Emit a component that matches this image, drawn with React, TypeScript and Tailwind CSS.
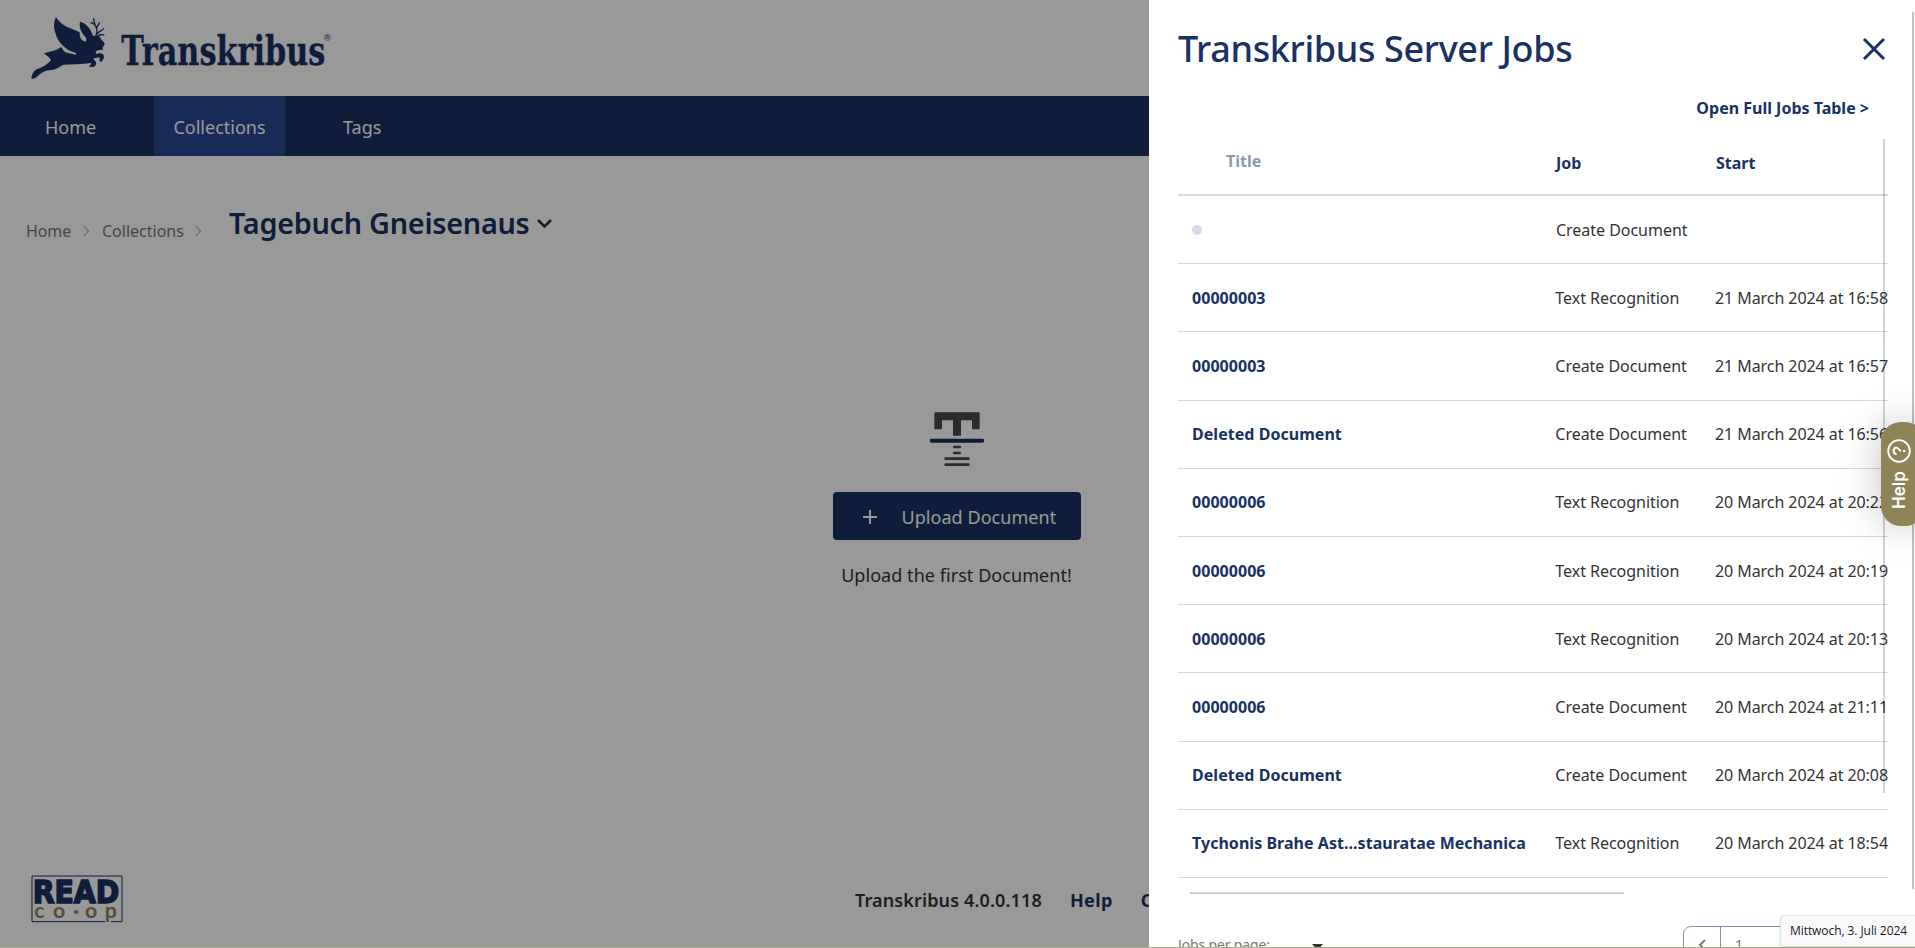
import React from "react";

type Job = { title: string; job: string; start: string };

const jobs: Job[] = [
  { title: "", job: "Create Document", start: "" },
  { title: "00000003", job: "Text Recognition", start: "21 March 2024 at 16:58" },
  { title: "00000003", job: "Create Document", start: "21 March 2024 at 16:57" },
  { title: "Deleted Document", job: "Create Document", start: "21 March 2024 at 16:56" },
  { title: "00000006", job: "Text Recognition", start: "20 March 2024 at 20:22" },
  { title: "00000006", job: "Text Recognition", start: "20 March 2024 at 20:19" },
  { title: "00000006", job: "Text Recognition", start: "20 March 2024 at 20:13" },
  { title: "00000006", job: "Create Document", start: "20 March 2024 at 21:11" },
  { title: "Deleted Document", job: "Create Document", start: "20 March 2024 at 20:08" },
  { title: "Tychonis Brahe Ast...stauratae Mechanica", job: "Text Recognition", start: "20 March 2024 at 18:54" },
];

function Logo() {
  return (
    <svg width="360" height="96" viewBox="0 0 1080 288" className="block overflow-visible" fill="#193163">
      <path d="M94 236 C94 226 100 215 107 209 C122 204 140 196 153 180 C150 172 140 168 132 160 C142 155 160 154 170 149 L184 141 C188 148 192 154 196 157 L226 164 C232 162 228 158 222 157 C198 150 174 128 167 102 C160 82 161 64 168 51 C174 62 190 78 208 83 L239 97 C239 110 241 121 256 125 C263 118 258 111 250 104 C240 90 237 77 240 65 C258 69 273 86 279 108 L295 106 C302 112 302 120 312 126 L314 134 C311 138 306 140 309 150 L298 150 C288 151 284 157 290 162 C296 158 306 159 311 165 C313 173 311 180 302 186 C296 183 302 177 297 171 C290 176 281 171 281 179 C291 185 291 193 283 200 L269 201 C266 195 277 194 273 189 C247 193 215 194 190 194 C178 201 166 210 152 210 C137 210 124 218 113 228 C108 235 101 237 94 236 Z" />
      <g fill="none" stroke="#193163" strokeWidth="4">
        <path d="M287 110C293 96 290 82 285 75C281 71 277 70 272 67M281 55C281 66 285 71 286 78M289 85 299 67M291 103C296 92 304 94 312 85M294 108C300 101 306 106 313 104" />
      </g>
      <text x="364" y="195" fontFamily="'DejaVu Serif','Liberation Serif',serif" fontWeight="700" fontSize="122" stroke="#193163" strokeWidth="1" textLength="612" lengthAdjust="spacingAndGlyphs">Transkribus</text>
      <text x="972" y="123" fontFamily="'Liberation Sans',sans-serif" fontSize="28">®</text>
    </svg>
  );
}

function TIcon() {
  return (
    <svg width="54" height="55" viewBox="0 0 162 165" className="block">
      <path d="M16 1h130q3 0 3 3v45q0 3-3 3h-17q-3 0-3-3V25H93v46H69V25H36v24q0 3-3 3H16q-3 0-3-3V4q0-3 3-3z" fill="#4a4a4a" />
      <rect x="0" y="80" width="162" height="12" rx="4" fill="#193163" />
      <g fill="#4a4a4a">
        <rect x="69" y="101" width="24" height="8" rx="3" />
        <rect x="69" y="119" width="24" height="8" rx="3" />
        <rect x="43" y="136" width="76" height="8" rx="4" />
        <rect x="43" y="154" width="76" height="8" rx="4" />
      </g>
    </svg>
  );
}

function ReadCoop() {
  return (
    <svg width="92" height="49" viewBox="0 0 276 147" className="block overflow-visible">
      <path d="M222 140H3V3H273V140H240" fill="none" stroke="#193163" strokeWidth="3" />
      <text x="5" y="85" fontFamily="'DejaVu Sans',sans-serif" fontWeight="700" fontSize="95" fill="#193163" stroke="#193163" strokeWidth="5" textLength="260" lengthAdjust="spacingAndGlyphs">READ</text>
      <text x="10 66 127 162 221" y="129" fontFamily="Lato,sans-serif" fontWeight="700" fontSize="64" fill="#8f8358">co·op</text>
    </svg>
  );
}

export default function App() {
  return (
    <div className="relative h-[948px] w-[1915px] overflow-hidden bg-white font-['Noto_Sans',sans-serif] text-[#333]">
      <div className="flex h-full flex-col">
        <header className="h-24 shrink-0">
          <Logo />
        </header>
        <nav className="flex h-[60px] shrink-0 items-stretch bg-[#193163] text-lg text-white">
          <a className="flex w-[154px] items-center pt-[2px] pl-[45px]">Home</a>
          <a className="flex w-[131px] items-center justify-center bg-[#28488f] pt-[2px]">Collections</a>
          <a className="flex items-center pt-[2px] pl-[58px]">Tags</a>
        </nav>
        <div className="flex h-[100px] shrink-0 items-end pb-[13px] pl-[26px] text-base text-[#777]">
          <span className="w-[46px] whitespace-nowrap tracking-[-0.1px]">Home</span>
          <svg width="30" height="24" viewBox="0 0 30 24" fill="none" stroke="#bbb" strokeWidth="1.3"><path d="m12 7 4.500 5-4.500 5" /></svg>
          <span className="w-[82px] whitespace-nowrap">Collections</span>
          <svg width="30" height="24" viewBox="0 0 30 24" fill="none" stroke="#bbb" strokeWidth="1.3"><path d="m12 7 4.500 5-4.500 5" /></svg>
          <h1 className="ml-[15px] w-[307px] pb-px text-[28.8px] leading-[38px] font-semibold tracking-[-0.27px] whitespace-nowrap text-[#193163]">Tagebuch Gneisenaus</h1>
          <svg width="18" height="38" viewBox="0 0 18 38" fill="none" stroke="#193163" strokeWidth="2.5" className="mb-px"><path d="m2 16 6.500 6.500L15 16" /></svg>
        </div>
        <main className="flex flex-1 flex-col items-center pt-[156px] pr-[2px] text-lg">
          <TIcon />
          <button className="mt-[25px] flex h-12 w-[248px] items-center rounded bg-[#193163] pl-[30px] text-white">
            <svg width="14" height="14" viewBox="0 0 14 14" stroke="white" strokeWidth="2" className="mt-[2px]"><path d="M7 0v14M0 7h14" /></svg>
            <span className="mt-[2px] ml-[25px] whitespace-nowrap tracking-[0.05px]">Upload Document</span>
          </button>
          <p className="mt-[21px] tracking-[0.05px]">Upload the first Document!</p>
        </main>
        <footer className="flex h-[73px] shrink-0 items-start pl-[31px]">
          <ReadCoop />
          <div className="mt-[11px] ml-[732px] flex gap-7 text-lg font-semibold whitespace-nowrap">
            <span className="tracking-[0.13px]">Transkribus 4.0.0.118</span>
            <span className="font-bold tracking-[0.4px] text-[#193163]">Help</span>
            <span className="font-bold text-[#193163]">Contact</span>
          </div>
        </footer>
      </div>

      <div className="absolute inset-0 bg-black/40" />

      <div className="absolute top-[139px] left-[1883px] z-10 h-[654px] w-[2px] bg-[#14233c]/20" />
      <aside className="absolute inset-y-0 right-0 flex w-[766px] flex-col bg-white pl-[29px]">
        <div className="flex h-[98px] shrink-0 items-center justify-between pr-[29px]">
          <h2 className="text-4xl font-medium tracking-[-0.36px] whitespace-nowrap text-[#193163]">Transkribus Server Jobs</h2>
          <svg width="24" height="24" viewBox="0 0 24 24" stroke="#193163" strokeWidth="3"><path d="M2 2l20 20M22 2 2 22" /></svg>
        </div>
        <div className="flex h-[41px] shrink-0 justify-end pr-[46px] text-base leading-[20px] font-bold text-[#193163]">Open Full Jobs Table &gt;</div>
        <div className="w-[710px]">
          <div className="flex h-[57px] items-center border-b-2 border-[#dadada] pb-[8px] text-base font-bold text-[#193163]">
            <span className="w-[378px] pb-[3px] pl-12 text-[#8c98b1]">Title</span>
            <span className="w-[160px]">Job</span>
            <span>Start</span>
          </div>
          {jobs.map((j, i) => (
            <div key={i} className="flex h-[68.2px] items-center border-b border-[#dadada] text-base whitespace-nowrap">
              <span className="w-[378px] pl-[14px] font-bold tracking-[0.04px] text-[#193163]">
                {j.title || <i className="block size-[10px] rounded-full bg-[#d5dae4]" />}
              </span>
              <span className="w-[160px] tracking-[-0.03px]">{j.job}</span>
              <span className="tracking-[-0.07px]">{j.start}</span>
            </div>
          ))}
        </div>
        <div className="mt-[14px] ml-3 h-[2px] w-[434px] shrink-0 bg-[#cccfd3]" />
        <div className="mt-[32px] flex shrink-0 items-start text-sm text-[#777]">
          <span className="mt-[9px] w-[134px] tracking-[-0.15px]">Jobs per page:</span>
          <svg width="12" height="8" viewBox="0 0 12 8" className="mt-[18px]"><path d="M0 0h11L5.500 6z" fill="#333" /></svg>
          <div className="ml-[359px] flex h-10 w-[205px] rounded-lg border border-[#7f8fb3]">
            <span className="flex w-[37px] justify-center border-r border-[#7f8fb3] pt-[12px]">
              <svg width="8" height="12" viewBox="0 0 8 12" fill="none" stroke="#777" strokeWidth="2"><path d="M7 1 2 6l5 5" /></svg>
            </span>
            <span className="pt-[8px] pl-[14px]">1</span>
          </div>
        </div>
      </aside>

      <div className="absolute top-[12px] left-[1912px] h-[877px] w-[2px] bg-[#c1c1c1]" />
      <div className="absolute top-[422px] left-[1881px] z-20 flex h-[104px] w-[44px] flex-col items-center rounded-[20px] bg-[#8f8358] pt-[17px] pr-[9px] text-white shadow-[0_0_40px_rgba(0,0,0,0.25)]">
        <svg width="24" height="24" viewBox="0 0 24 24" fill="none" stroke="white" strokeWidth="2" className="shrink-0 -rotate-90">
          <circle cx="12" cy="12" r="10.800" strokeWidth="1.800" />
          <path d="M8.800 9.600c.2-4 6.600-3.900 6.600-.3 0 2.300-3.200 2.400-3.300 4.800M12 16v2.300" />
        </svg>
        <span className="mt-[8px] h-[38px] rotate-180 font-['Inter',sans-serif] text-[17px] leading-[20px] font-semibold [writing-mode:vertical-rl]">Help</span>
      </div>
      <div className="absolute top-[915px] left-[1780px] z-20 flex h-[32px] w-[140px] items-center rounded-[4px] border border-[#e0e0e0] bg-[#f9f9fb] pl-[9px] font-['Open_Sans',sans-serif] text-xs tracking-[-0.07px] whitespace-nowrap text-[#1a1a1a] shadow-md">Mittwoch, 3. Juli 2024</div>
      <div className="absolute inset-x-0 bottom-0 h-px bg-[#a9ad96]" />
    </div>
  );
}
